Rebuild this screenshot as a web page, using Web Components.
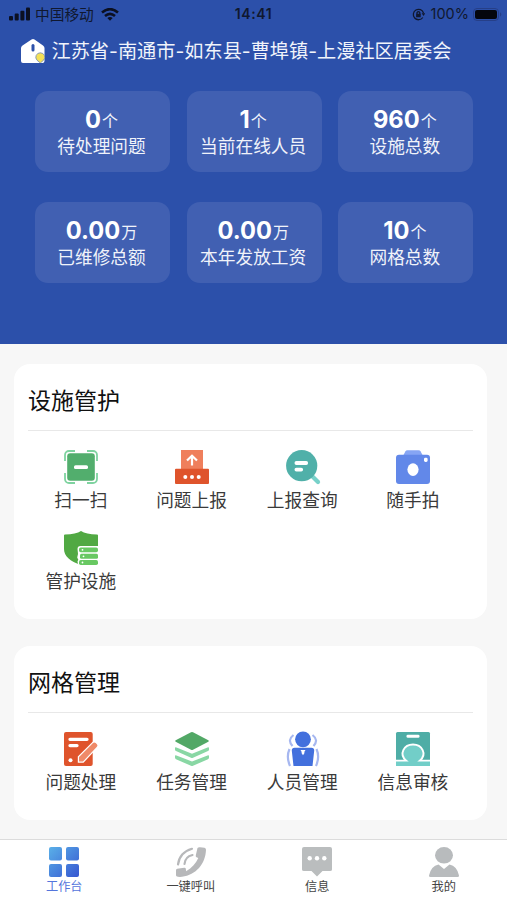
<!DOCTYPE html>
<html lang="zh-CN">
<head>
<meta charset="utf-8">
<title>工作台</title>
<style>
html,body{margin:0;padding:0;height:900px;overflow:hidden;background:#f7f7f7}
body{font-family:Inter,"Noto Sans CJK SC",sans-serif}
</style>
</head>
<body>
<work-app></work-app>
<script>
const define = (name, html, setup) => customElements.define(name, class extends HTMLElement {
  connectedCallback() {
    if (this.shadowRoot) return;
    const t = document.createElement('template');
    t.innerHTML = html;
    this.attachShadow({mode: 'open'}).append(t.content.cloneNode(true));
    if (setup) setup(this, this.shadowRoot);
  }
});

const icons = {
  scan: `<path d="M1 11V5a4 4 0 0 1 4-4h6M23 1h6a4 4 0 0 1 4 4v6M33 23v6a4 4 0 0 1-4 4h-6M11 33H5a4 4 0 0 1-4-4v-6" fill="none" stroke="#7fd3a0" stroke-width="1.8"/><rect x="3.2" y="3.2" width="27.6" height="27.6" rx="3" fill="#52ae6d"/><rect x="10" y="15.2" width="14" height="3.8" rx="1.6" fill="#fff"/>`,
  report: `<path d="M6 0h22v19H6z" fill="#ef7f5c"/><rect x="0" y="18.700" width="34" height="15.300" rx="1" fill="#df542c"/><path d="M17 15.500V6M12 10.500l5-4.800 5 4.800" fill="none" stroke="#fff" stroke-width="2.200"/><g fill="#fff"><circle cx="10.300" cy="27" r="2"/><circle cx="17" cy="27" r="2"/><circle cx="23.700" cy="27" r="2"/></g>`,
  query: `<path d="M27 27l5 5" stroke="#77d1c9" stroke-width="4.2" stroke-linecap="round"/><circle cx="15.7" cy="15.7" r="15.6" fill="#50b0a9"/><path d="M10.4 13h9.800M10.400 19.600h4.800" stroke="#fff" stroke-width="3.800" stroke-linecap="round"/>`,
  camera: `<path d="M7 6L9.3 1.5Q10 .2 11.5.2h11q1.500 0 2.200 1.300L27 6z" fill="#86a5f4"/><rect y="4.700" width="34" height="29.300" rx="3" fill="#6288e9"/><ellipse cx="17" cy="19.600" rx="5.600" ry="6.300" fill="#fff"/><rect x="28" y="7.700" width="3.600" height="4.300" rx="1.400" fill="#fff"/>`,
  shield: `<path d="M17 0Q22 3.400 33 3.400q1 0 1 1V18q0 9-9 13.500L17 34C6 30.500 0 25 0 18V4.400q0-1 1-1Q12 3.400 17 0z" fill="#51a943"/><path d="M13.500 18q0-3 3-3H35v19.500H16l-2-1.200-.5-3 .8-1.600-1.100-2.200.8-3.500z" fill="#fff"/><g fill="#68c862"><rect x="15" y="16.400" width="19" height="4.900" rx="1.800"/><rect x="16" y="22.800" width="18" height="4.900" rx="1.500"/><rect x="15" y="29.100" width="19" height="4.900" rx="1.800"/></g><g fill="#fff"><circle cx="18.500" cy="18.800" r=".9"/><circle cx="19.500" cy="25.300" r=".9"/><circle cx="18.500" cy="31.500" r=".9"/></g>`,
  handle: `<rect width="28.700" height="34" rx="2" fill="#df542c"/><path d="M6 7.300h17M6 13.600h7" stroke="#fff" stroke-width="3.300" stroke-linecap="round"/><circle cx="6.500" cy="28.200" r="2" fill="#fff"/><path d="M15 29.500V25L29 11q1.300-1.200 2.700.1l1.200 1.200q1.200 1.300 0 2.500L19 29.500z" fill="#ef8a69" stroke="#fff" stroke-width="2.400"/><path d="M29 11q1.300-1.200 2.700.1l1.200 1.200q1.200 1.300 0 2.500L19 29.500h-4V25z" fill="#ef8a69"/>`,
  layers: `<g fill="#89d7a4"><path d="M0 24q0-1 1.500-.5L17 29.500l15.500-6q1.500-.5 1.500.5v1.800q0 .9-1 1.400L18 33.800q-1 .5-2 0L1 27.200q-1-.5-1-1.400z"/><path d="M0 16q0-1 1.500-.5L17 21.800l15.500-6.300q1.500-.5 1.500.5v1.700q0 .9-1 1.400L18 25.800q-1 .5-2 0L1 19.100q-1-.5-1-1.400z"/></g><path d="M16 .3q1-.5 2 0L33.300 8.200q1.200.8 0 1.600L18 17.800q-1 .5-2 0L.7 9.800q-1.200-.8 0-1.600z" fill="#52a866"/>`,
  people: `<g fill="none" stroke="#a6b7f0" stroke-width="2.200"><path d="M7.500 3Q1 8 6.500 14M26.500 3q6.500 5 1 11M3.500 17q-3.500 8 .5 17M30.500 17q3.500 8-.5 17"/></g><circle cx="17" cy="7.300" r="7.900" fill="#4370dd"/><path d="M8.500 15.700h17q2.900 0 2.700 3L26.500 34h-19L5.800 18.700q-.2-3 2.700-3z" fill="#4370dd"/><path d="M14.500 18h5l-1.200 2 .2 1L17 23.200l-1.500-2.200.2-1z" fill="#fff"/>`,
  review: `<rect width="34" height="34" rx="1.500" fill="#4eada6"/><rect x="10.500" y="2.800" width="13" height="3" rx="1.300" fill="#fff"/><path d="M0 29h10.200C2.500 22 8 12.800 17 12.800S31.500 22 23.800 29H34v5H0z" fill="#72cec8"/><path d="M0 28.600h10.200C2.500 22 8 12.500 17 12.500S31.500 22 23.800 28.600H34" fill="none" stroke="#fff" stroke-width="1.900"/>`,
  home: `<defs><linearGradient id="g" gradientUnits="userSpaceOnUse" x1="0" y1="0" x2="30" y2="30"><stop stop-color="#5ab0e8"/><stop offset="1" stop-color="#3657d1"/></linearGradient></defs><g fill="url(#g)"><rect width="13" height="13.500" rx="2"/><rect x="17" width="13" height="13.500" rx="2"/><rect y="17" width="13" height="13" rx="2"/><rect x="17" y="17" width="13" height="13" rx="2"/></g>`,
  call: `<path d="M21.500 1q.8-1 2.500-.8l4.500.6q1.500.3 1.500 2C29.500 17 20 28 6 29.800q-4 .4-5.500-.6Q0 29 0 28v-4.500q0-1.500 1.200-1.700l7-1q1.400-.2 1.600 1l.3 2.400C16 21 20 16 22.300 11l-1.800-.7q-1-.5-.7-2z" fill="#b7b8ba"/><path d="M2 17.500Q3.500 5.500 16 1.800M8.500 17Q9 9.800 16.500 8" fill="none" stroke="#b7b8ba" stroke-width="2.200" stroke-linecap="round"/>`,
  message: `<path d="M2 0h26q2 0 2 2v20.500q0 1.500-2 1.500h-7.500L15 29.500 9.500 24H2q-2 0-2-1.500V2q0-2 2-2z" fill="#babdbe"/><g fill="#fff"><circle cx="7.700" cy="11.200" r="2.200"/><circle cx="15" cy="11.200" r="2.200"/><circle cx="22.300" cy="11.200" r="2.200"/></g>`,
  user: `<ellipse cx="15" cy="8.300" rx="9" ry="8.300" fill="#b8bbbd"/><path d="M9.500 17.500L15 22l5.500-4.500Q28 19 30 28.500q.2 1.500-1.500 1.500h-27Q-.2 30 0 28.500 2 19 9.500 17.500z" fill="#b8bbbd"/>`
};

define('app-icon', `<style>:host{display:block}svg{display:block;width:100%;height:100%;overflow:visible}</style><svg></svg>`, (el, root) => {
  const svg = root.querySelector('svg');
  svg.setAttribute('viewBox', el.getAttribute('box'));
  svg.innerHTML = icons[el.getAttribute('name')];
});

define('status-bar', `<style>
:host{display:grid;grid-template-columns:1fr auto 1fr;align-items:center;height:28px;color:#10182f;font-size:15px;line-height:20px}
.l,.r{display:flex;align-items:center}.l{padding-left:9px}.r{justify-content:flex-end;padding-right:5px}
.time{font-weight:600;font-size:14px;letter-spacing:.6px}
.carrier{margin:0 7px 0 5px;font-size:14.700px;line-height:20px;padding-top:1px}.pct{margin:0 4px 0 6px;font-size:14.500px}
svg{display:block}
</style>
<div class="l"><svg width="21" height="14" fill="#0b1022"><rect y="9" width="4" height="4.500" rx="1"/><rect x="5.700" y="6.500" width="4" height="7" rx="1"/><rect x="11.400" y="3.700" width="4" height="9.800" rx="1"/><rect x="17" y=".5" width="4" height="13" rx="1"/></svg><span class="carrier">中国移动</span>
<svg width="18" height="13" viewBox="0 0 18 13" fill="none" stroke="#0b1022" stroke-width="2.600"><path d="M1 4.400q8-6.500 16 0M4 8q5-4.300 10 0"/><path d="M9 12.800L6.300 10.100q2.700-2.100 5.400 0z" fill="#0b1022" stroke="none"/></svg></div>
<div class="time">14:41</div>
<div class="r"><svg width="13" height="13" viewBox="0 0 13 13" fill="none" stroke="#10182f" stroke-width="1.300"><path d="M10.800 9.500A5.200 5.200 0 1 1 11.500 5"/><path d="M9.600 5.300h3.600l-1.600 2.600z" fill="#10182f" stroke="none"/><rect x="4.100" y="5.800" width="4.600" height="3.500" rx=".5" fill="#10182f" stroke="none"/><path d="M5 6V4.700q1.400-2 2.800 0V6"/></svg><span class="pct">100%</span>
<svg width="29" height="13" viewBox="0 0 29 13"><rect x=".5" y=".5" width="25" height="12" rx="3.500" fill="none" stroke="#263f88"/><rect x="2" y="2" width="22" height="9" rx="2" fill="#04060d"/><path d="M27 4.300q2.600 2.200 0 4.400z" fill="#263f88"/></svg></div>`);

define('org-title', `<style>
:host{display:flex;align-items:center;height:46px;padding-left:21px;gap:6.500px;color:#f1f4fb;font-size:19.200px;line-height:28px;white-space:nowrap}
svg{display:block;flex:none}
</style><svg width="24" height="24" viewBox="0 0 24 24"><path d="M10.500.5q1.500-1 3 0L22 6.500q1.500 1 1.500 2.500v13q0 2-2 2H2q-2 0-2-2V9q0-1.500 1.500-2.500z" fill="#fff"/><path d="M12 6.500V11" stroke="#2d51aa" stroke-width="3" stroke-linecap="round"/><path d="M19.300 13.800a4.400 4.400 0 0 1 3.300 7.400L19.300 24l-3.300-2.800a4.400 4.400 0 0 1 3.300-7.400z" fill="#f4e157" stroke="#7088b8" stroke-width=".8"/></svg><span><slot></slot></span>`);

define('stat-card', `<style>
:host{display:flex;flex-direction:column;align-items:center;box-sizing:border-box;height:81px;padding:15px 2px 0 0;border-radius:13px;background:#4160b2;color:#f0f3fa;white-space:nowrap}
.v{display:flex;align-items:baseline;height:27px;line-height:27px}
b{font-weight:650;font-size:23.700px;color:#fff}.u{font-size:16px;margin-left:1px;line-height:20px;transform:translateY(-1px)}
.n{font-size:17.700px;line-height:27px}
</style><div class="v"><b></b><span class="u"></span></div><div class="n"><slot></slot></div>`, (el, root) => {
  root.querySelector('b').textContent = el.getAttribute('value');
  root.querySelector('.u').textContent = el.getAttribute('unit');
});

define('section-card', `<style>
:host{display:block;box-sizing:border-box;margin:0 20px 27px 14px;padding:0 14px;border-radius:16px;background:#fff}
h2{margin:0;height:66px;line-height:75px;font-size:23px;font-weight:400;color:#111;border-bottom:1px solid #e8e8e8}
.g{display:grid;grid-template-columns:repeat(4,110.700px);margin-left:-2.500px;padding-top:19px;row-gap:19px}
</style><h2></h2><div class="g"><slot></slot></div>`, (el, root) => {
  root.querySelector('h2').textContent = el.getAttribute('heading');
});

define('menu-item', `<style>
:host{display:flex;flex-direction:column;align-items:center;height:62px;color:#3a3a3a;font-size:17.700px;line-height:28px;white-space:nowrap}
app-icon{width:34px;height:34px;flex:none;margin:0 0 3px .7px}
</style><app-icon box="0 0 34 34"></app-icon><span><slot></slot></span>`, (el, root) => {
  const i = document.createElement('app-icon');
  i.setAttribute('box', '0 0 34 34'); i.setAttribute('name', el.getAttribute('icon'));
  root.querySelector('app-icon').replaceWith(i);
});

define('tab-item', `<style>
:host{display:flex;flex-direction:column;align-items:center;color:#444;font-size:12.200px;line-height:18px}
:host([active]){color:#5475dc}
.i{width:30px;height:30px;margin-bottom:1px}
</style><div class="i"></div><span><slot></slot></span>`, (el, root) => {
  root.querySelector('.i').innerHTML = '<app-icon box="0 0 30 30" name="' + el.getAttribute('icon') + '" style="height:30px"></app-icon>';
});

define('tab-bar', `<style>
:host{display:grid;grid-template-columns:repeat(4,1fr);box-sizing:border-box;height:61px;padding:7px 0 0 1px;border-top:1px solid #dcdcdc;background:#fff}
</style><slot></slot>`);

define('work-app', `<style>
:host{display:flex;flex-direction:column;width:507px;height:900px;background:#f7f7f7}
header{box-sizing:border-box;height:344px;background:#2c50aa;flex:none}
.stats{display:grid;grid-template-columns:repeat(3,135px);column-gap:16.700px;row-gap:30px;padding:17px 0 0 35px}
main{flex:1;padding-top:20px;min-height:0;overflow:hidden}
.a{height:255px}.b{height:174px}
</style>
<header><status-bar></status-bar><org-title>江苏省-南通市-如东县-曹埠镇-上漫社区居委会</org-title>
<div class="stats"><stat-card value="0" unit="个">待处理问题</stat-card><stat-card value="1" unit="个">当前在线人员</stat-card><stat-card value="960" unit="个">设施总数</stat-card><stat-card value="0.00" unit="万">已维修总额</stat-card><stat-card value="0.00" unit="万">本年发放工资</stat-card><stat-card value="10" unit="个">网格总数</stat-card></div></header>
<main><section-card class="a" heading="设施管护"><menu-item icon="scan">扫一扫</menu-item><menu-item icon="report">问题上报</menu-item><menu-item icon="query">上报查询</menu-item><menu-item icon="camera">随手拍</menu-item><menu-item icon="shield">管护设施</menu-item></section-card>
<section-card class="b" heading="网格管理"><menu-item icon="handle">问题处理</menu-item><menu-item icon="layers">任务管理</menu-item><menu-item icon="people">人员管理</menu-item><menu-item icon="review">信息审核</menu-item></section-card></main>
<tab-bar><tab-item icon="home" active>工作台</tab-item><tab-item icon="call">一键呼叫</tab-item><tab-item icon="message">信息</tab-item><tab-item icon="user">我的</tab-item></tab-bar>`);
</script>
</body>
</html>
